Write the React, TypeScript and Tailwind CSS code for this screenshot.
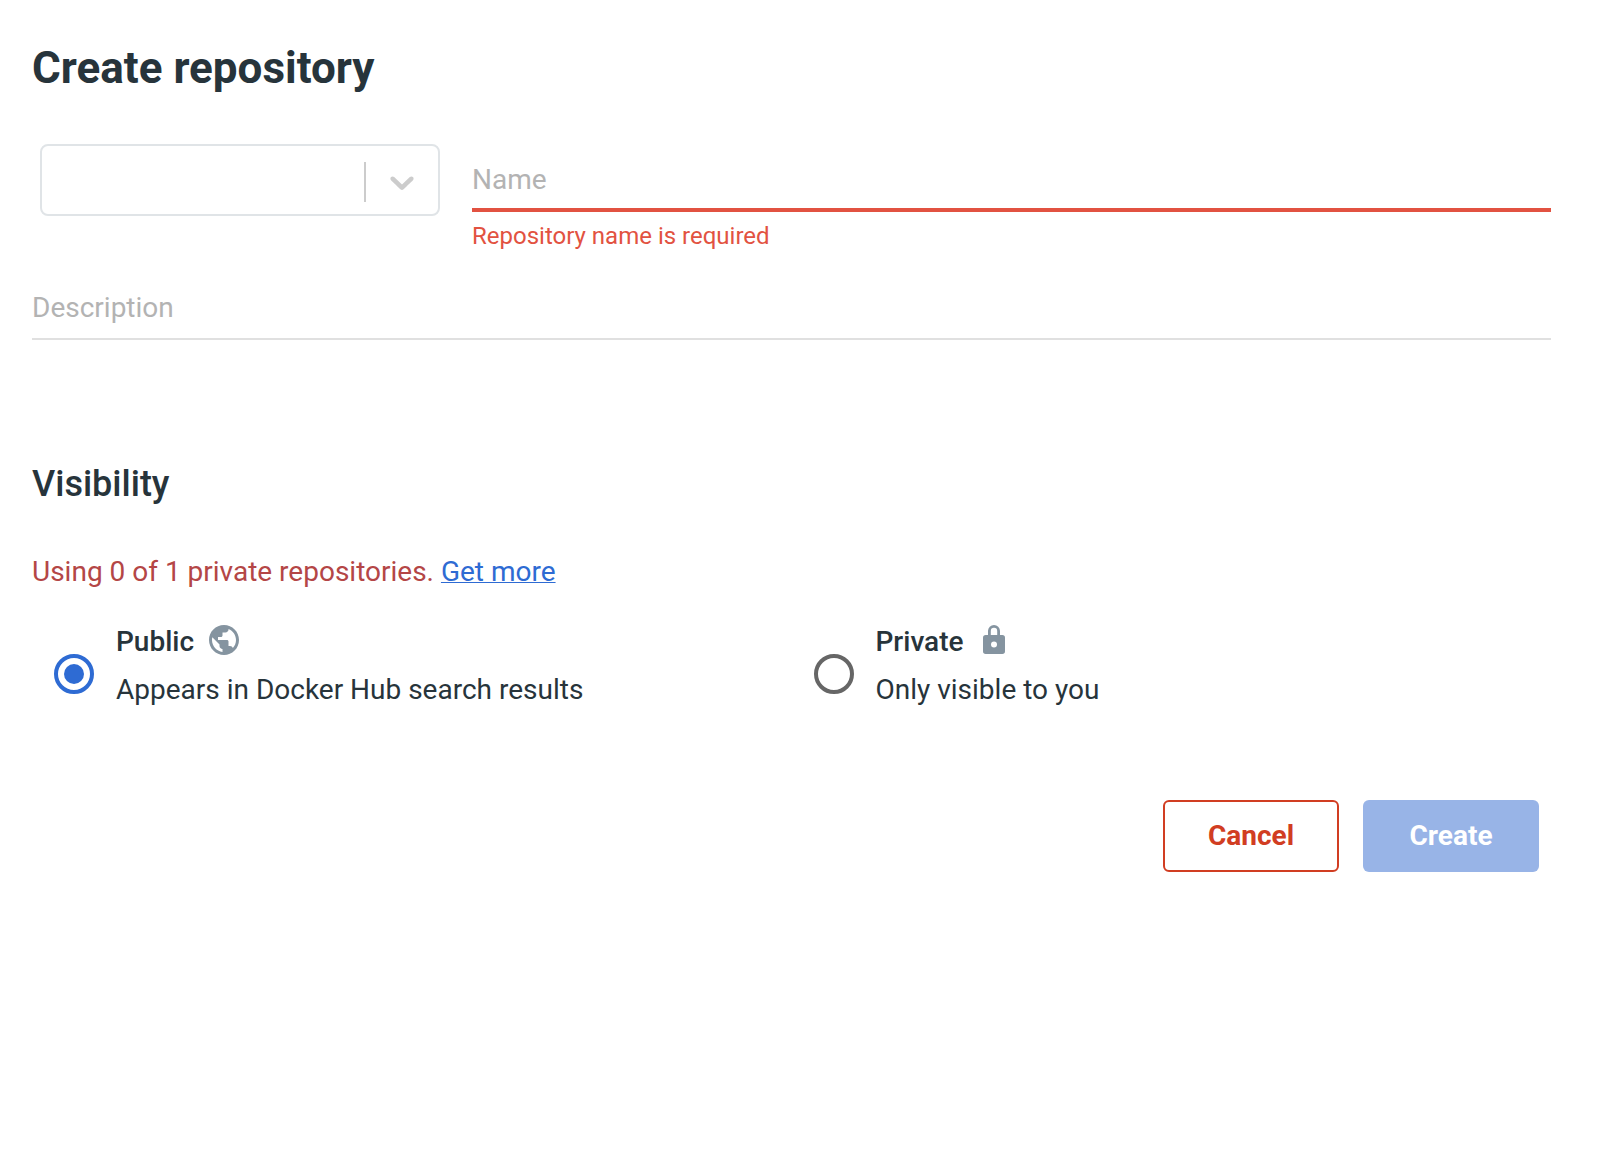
import React from "react";

function ChevronDown() {
  return (
    <svg viewBox="0 0 20 20" className="size-10 fill-[#cccccc]" aria-hidden="true">
      <path d="M4.516 7.548c0.436-0.446 1.043-0.481 1.576 0l3.908 3.747 3.908-3.747c0.533-0.481 1.141-0.446 1.574 0 0.436 0.445 0.408 1.197 0 1.615-0.406 0.418-4.695 4.502-4.695 4.502-0.217 0.223-0.502 0.335-0.787 0.335s-0.57-0.112-0.789-0.335c0 0-4.287-4.084-4.695-4.502s-0.436-1.17 0-1.615z" />
    </svg>
  );
}

function Globe() {
  return (
    <svg viewBox="0 0 24 24" className="size-9 fill-[#8594a0]" aria-hidden="true">
      <path d="M12 2C6.48 2 2 6.48 2 12s4.48 10 10 10 10-4.48 10-10S17.52 2 12 2zm-1 17.93c-3.95-.49-7-3.85-7-7.93 0-.62.08-1.21.21-1.79L9 15v1c0 1.1.9 2 2 2v1.93zm6.9-2.54c-.26-.81-1-1.39-1.9-1.39h-1v-3c0-.55-.45-1-1-1H8v-2h2c.55 0 1-.45 1-1V7h2c1.1 0 2-.9 2-2v-.41c2.93 1.19 5 4.06 5 7.41 0 2.08-.8 3.97-2.1 5.39z" />
    </svg>
  );
}

function Lock() {
  return (
    <svg viewBox="0 0 22 29" className="mb-[2px] h-[29px] w-[22px] fill-[#8594a0]" aria-hidden="true">
      <path
        fillRule="evenodd"
        d="M5 10V6a6 6 0 0 1 12 0v4h2.300A2.700 2.700 0 0 1 22 12.700v13.600A2.700 2.700 0 0 1 19.300 29H2.700A2.700 2.700 0 0 1 0 26.300V12.700A2.700 2.700 0 0 1 2.700 10zM7.800 10h6.400V6a3.200 3.200 0 0 0-6.400 0zM11 16.500a3 3 0 1 0 0 6 3 3 0 0 0 0-6z"
      />
    </svg>
  );
}

function Radio({ checked }: { checked?: boolean }) {
  return checked ? (
    <span className="mt-8 flex size-10 shrink-0 items-center justify-center rounded-full border-4 border-[#2e6bd3]">
      <span className="size-5 rounded-full bg-[#2e6bd3]" />
    </span>
  ) : (
    <span className="mt-8 size-10 shrink-0 rounded-full border-4 border-[#666666]" />
  );
}

function Option(props: { checked?: boolean; title: string; text: string; icon: React.ReactNode; gap: string }) {
  return (
    <div className="flex w-[760px] gap-[22px] pl-[22px]">
      <Radio checked={props.checked} />
      <div>
        <div className={"flex h-9 items-center " + props.gap}>
          <span className="pt-[3px] font-medium leading-9">{props.title}</span>
          {props.icon}
        </div>
        <div className="mt-3 leading-10">{props.text}</div>
      </div>
    </div>
  );
}

export default function App() {
  return (
    <main className="min-h-[1162px] w-[1624px] overflow-hidden bg-white pl-8 pr-[73px] pt-[42px] font-['Roboto',sans-serif] text-[28px] text-[#27343b]">
      <h1 className="text-[44px] font-bold leading-[52px]">Create repository</h1>

      <div className="mt-[50px] flex gap-8 pl-2">
        <div className="flex h-[72px] w-[400px] justify-end rounded-lg border-2 border-[#e0e4e7]">
          <div className="mt-4 h-10 w-0.5 bg-[#cccccc]" />
          <div className="px-4 pt-4">
            <ChevronDown />
          </div>
        </div>
        <div className="flex-1">
          <div className="h-[68px] border-b-4 border-[#e25241] pt-4 leading-10 text-[#b3b3b3]">Name</div>
          <div className="mt-1 text-2xl leading-10 text-[#e25241]">Repository name is required</div>
        </div>
      </div>

      <div className="mt-8 h-[52px] border-b-2 border-[#e0e0e0] leading-[39px] text-[#b3b3b3]">Description</div>

      <h2 className="mt-[120px] text-[36px] font-medium leading-[48px]">Visibility</h2>

      <p className="mt-11 leading-10 text-[#b44646]">
        Using 0 of 1 private repositories.{" "}
        <a className="text-[#2e6bd3] underline decoration-1 underline-offset-1">Get more</a>
      </p>

      <div className="mt-[30px] flex">
        <Option checked title="Public" text="Appears in Docker Hub search results" icon={<Globe />} gap="gap-3" />
        <Option title="Private" text="Only visible to you" icon={<Lock />} gap="gap-[19px]" />
      </div>

      <div className="mt-[90px] flex justify-end gap-6 pr-3 font-bold">
        <button className="h-[72px] w-44 rounded-md border-2 border-[#d13d22] text-[#d13d22]">Cancel</button>
        <button className="h-[72px] w-44 rounded-md bg-[#98b4e7] text-white">Create</button>
      </div>
    </main>
  );
}
